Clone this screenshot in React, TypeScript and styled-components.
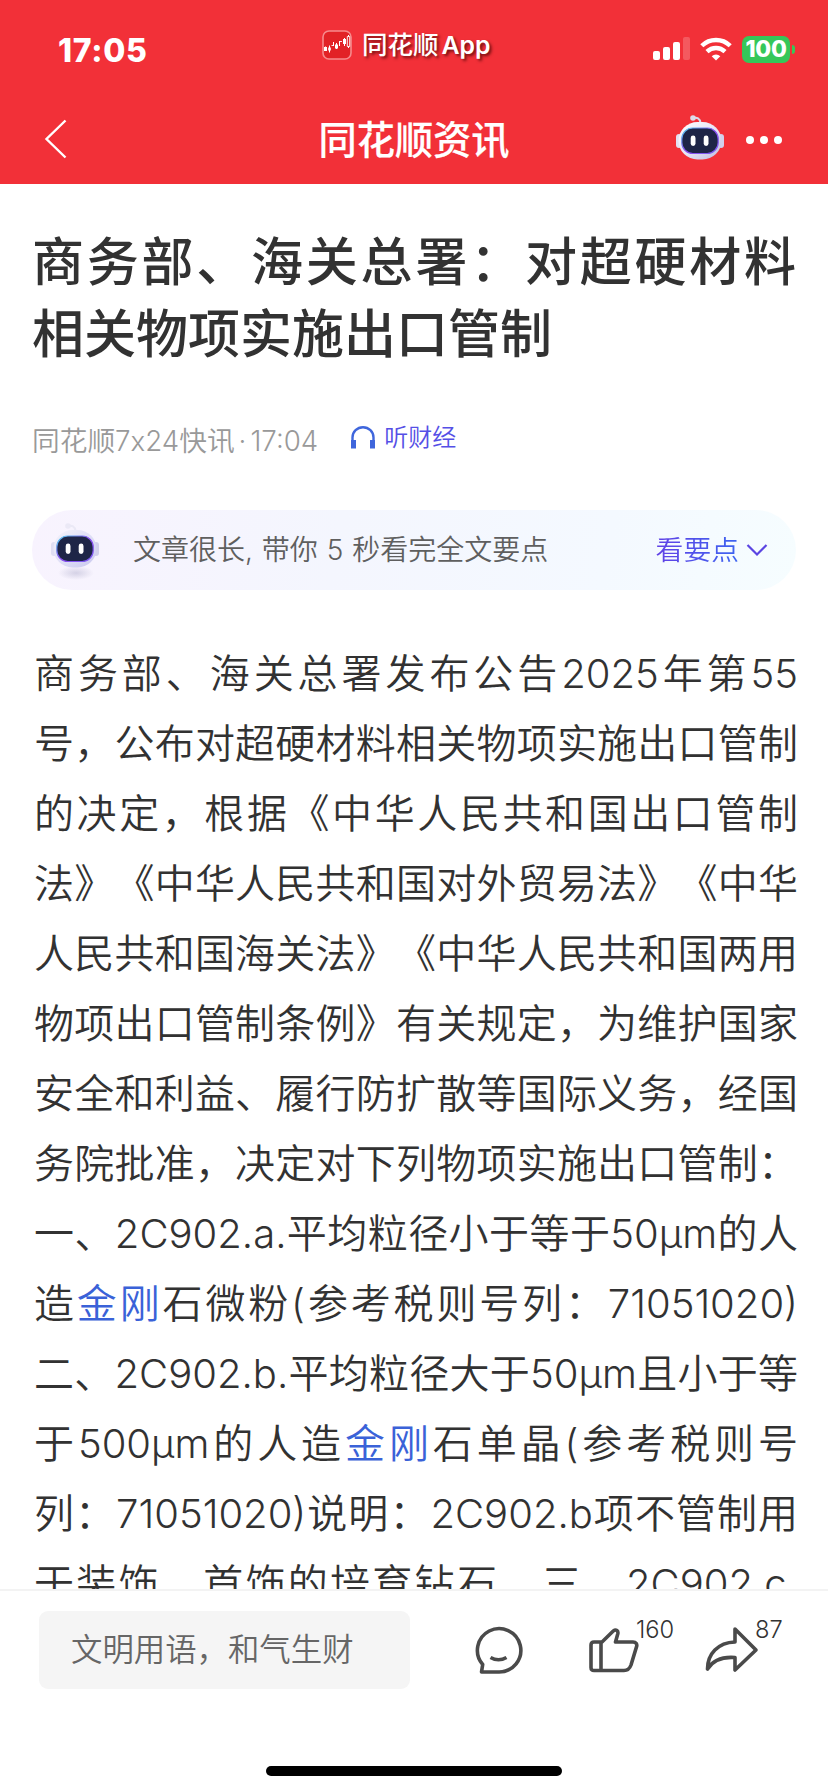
import React from "react";
import styled, { createGlobalStyle } from "styled-components";

const Global = createGlobalStyle`
  *{box-sizing:border-box}
  html,body{margin:0;padding:0;background:#fff}
  body{font-family:Inter,"Noto Sans CJK SC",sans-serif;text-spacing-trim:space-all;-webkit-font-smoothing:antialiased}
`;

const Screen = styled.div`
  width: 828px;
  height: 1792px;
  display: flex;
  flex-direction: column;
  overflow: hidden;
  background: #fff;
`;

const Header = styled.header`
  height: 184px;
  flex: none;
  background: #f23038;
  color: #fff;
`;

const StatusBar = styled.div`
  height: 96px;
  display: grid;
  grid-template-columns: 322px auto 1fr;
  align-items: center;
`;

const Clock = styled.div`
  padding: 5px 0 0 58px;
  font-size: 32px;
  font-weight: 800;
  line-height: 40px;
  letter-spacing: 0.7px;
`;

const AppTag = styled.div`
  display: flex;
  align-items: center;
  gap: 10px;
  margin-top: -6px;
  font-size: 25.5px;
  font-weight: 500;
  line-height: 32px;
  text-shadow: 2px 2px 3px rgba(60, 0, 0, 0.7);
`;

const Latin = styled.span`
  margin-left: 3px;
  font-size: 24.8px;
  font-weight: 600;
`;

const StatusIcons = styled.div`
  display: flex;
  justify-content: flex-end;
  align-items: center;
  padding: 2px 33px 0 0;
`;

const Battery = styled.div`
  display: flex;
  align-items: center;
  gap: 2px;
  margin-left: 10px;
`;

const BatteryBody = styled.div`
  width: 48px;
  height: 27px;
  border-radius: 7px;
  background: #35c759;
  font-size: 23px;
  font-weight: 800;
  line-height: 27px;
  text-align: center;
  letter-spacing: -0.3px;
`;

const BatteryTip = styled.div`
  width: 3px;
  height: 9px;
  border-radius: 0 3px 3px 0;
  background: #35c759;
`;

const NavBar = styled.nav`
  height: 88px;
  display: grid;
  grid-template-columns: 1fr auto 1fr;
  align-items: center;
`;

const BackButton = styled.div`
  padding: 0 0 3px 44px;
  display: flex;
`;

const NavTitle = styled.div`
  font-size: 38.2px;
  font-weight: 500;
  line-height: 48px;
  -webkit-text-stroke: 0.2px #fff;
`;

const NavActions = styled.div`
  display: flex;
  justify-content: flex-end;
  align-items: center;
  gap: 21px;
  padding-right: 46px;
`;

const RobotSlot = styled.div`
  display: flex;
  padding-top: 3px;
`;

const Article = styled.main`
  flex: 1;
  min-height: 0;
  overflow: hidden;
  padding: 43px 32px 0;
`;

const Line = styled.div<{ $ragged?: boolean }>`
  white-space: nowrap;
  text-align: justify;
  text-align-last: ${(p) => (p.$ragged ? "left" : "justify")};
`;

const Title = styled.h1`
  margin: 0;
  font-size: 52px;
  font-weight: 500;
  line-height: 72px;
  color: #323232;
`;

const Meta = styled.div`
  display: flex;
  align-items: center;
  height: 40px;
  margin-top: 50px;
  font-size: 27.7px;
  font-weight: 350;
  line-height: 40px;
  color: #999;
`;

const Dot = styled.span`
  margin: 0 4px;
`;

const Listen = styled.span`
  display: flex;
  align-items: center;
  gap: 8px;
  margin: -7px 0 0 32px;
  font-size: 24px;
  color: #554fe6;
`;

const Summary = styled.section`
  display: flex;
  align-items: center;
  height: 80px;
  margin-top: 49px;
  padding: 0 28px 0 18px;
  border-radius: 40px;
  background: linear-gradient(100deg, #f8f3fe 0%, #f4f6fe 40%, #f4f9ff 75%, #f6fdff 100%);
  font-weight: 350;
`;

const SummaryText = styled.span`
  flex: 1;
  margin-left: 33px;
  padding-bottom: 5px;
  font-size: 28px;
  word-spacing: 1px;
  color: #5f5f5f;
`;

const SummaryLink = styled.span`
  margin-right: 7px;
  padding-bottom: 5px;
  font-size: 27.8px;
  background: linear-gradient(90deg, #6141e6, #3c64f0);
  background-clip: text;
  color: transparent;
`;

const Body = styled.div`
  margin: 49px -2px 0 2px;
  font-size: 40px;
  font-weight: 350;
  line-height: 70px;
  color: #323232;
`;

const Term = styled.a`
  color: #3a62d8;
`;

const Footer = styled.footer`
  flex: none;
  height: 203px;
  border-top: 2px solid #f3f3f3;
  background: #fff;
  display: flex;
  flex-direction: column;
  justify-content: space-between;
`;

const Tools = styled.div`
  display: flex;
  align-items: center;
  padding: 20px 0 0 39px;
`;

const CommentInput = styled.div`
  width: 371px;
  height: 78px;
  padding-left: 32px;
  border-radius: 9px;
  background: #f5f5f5;
  font-size: 31.4px;
  font-weight: 350;
  line-height: 78px;
  color: #666;
`;

const Tool = styled.div<{ $left: number }>`
  position: relative;
  display: flex;
  margin-left: ${(p) => p.$left}px;
`;

const Count = styled.span<{ $left: number }>`
  position: absolute;
  left: ${(p) => p.$left}px;
  top: -9px;
  font-size: 23.7px;
  font-weight: 350;
  line-height: 28px;
  color: #333;
`;

const HomeIndicator = styled.div`
  width: 296px;
  height: 10px;
  margin: 0 auto 16px;
  border-radius: 5px;
  background: #000;
`;

const AppIcon = () => (
  <svg width="30" height="30" viewBox="0 0 30 30">
    <rect x="1" y="1" width="28" height="28" rx="6" fill="#e22226" stroke="#f68a8c" strokeWidth="1.6" />
    <path d="M3.500 16.500v4M7.500 15.500v7M11.500 12v4M14.500 13v6M17.500 11v5M22.500 8v8M26.500 5v13" stroke="#fff" strokeWidth="1" />
    <path d="M2 17h3v4H2zM6.200 17.500h2.600v3H6.200zM13 14.500h3v4h-3zM21 9h3v5h-3z" fill="#fff" />
    <path d="M25.300 6.500h2.400v10h-2.400z" fill="#e22226" stroke="#fff" strokeWidth="0.900" />
    <path d="M9.500 15.500h2M17.500 11.500h2.500" stroke="#fff" strokeWidth="0.900" />
  </svg>
);

const SignalIcon = () => (
  <svg width="37" height="24" viewBox="0 0 37 24" fill="#fff">
    <rect x="0" y="14" width="7" height="9" rx="2" />
    <rect x="10" y="10" width="7" height="13" rx="2" />
    <rect x="20" y="5" width="7" height="18" rx="2" />
    <rect x="30" y="0" width="7" height="23" rx="2" opacity="0.2" />
  </svg>
);

const WifiSvg = styled.svg`
  margin-left: 10px;
`;

const WifiIcon = () => (
  <WifiSvg width="32" height="24" viewBox="0 0 32 24" fill="none" stroke="#fff" strokeWidth="4.400">
    <path d="M1.800 8.800A20.200 20.200 0 0 1 30.200 8.800" />
    <path d="M7 14.600A13 13 0 0 1 25 14.600" />
    <path d="M16 23.500l-4.300-4.300a6.200 6.200 0 0 1 8.600 0z" fill="#fff" stroke="none" />
  </WifiSvg>
);

const Robot = ({ id, soft }: { id: string; soft?: boolean }) => (
  <svg width="50" height="60" viewBox="0 0 50 60">
    <defs>
      <linearGradient id={id + "shell"} x1="0" y1="0" x2="1" y2="1">
        <stop offset="0" stopColor={soft ? "#f5f3fb" : "#ffffff"} />
        <stop offset="0.500" stopColor={soft ? "#dfdff6" : "#e8e6f5"} />
        <stop offset="1" stopColor={soft ? "#c9c8ee" : "#bdbbe0"} />
      </linearGradient>
      <linearGradient id={id + "rim"} x1="0" y1="0" x2="1" y2="1">
        <stop offset="0" stopColor="#55d4ee" />
        <stop offset="0.500" stopColor="#8a4df0" />
        <stop offset="1" stopColor="#7a5cf0" />
      </linearGradient>
      <radialGradient id={id + "shade"}>
        <stop offset="0" stopColor="#aaa8c8" stopOpacity="0.450" />
        <stop offset="1" stopColor="#aaa8c8" stopOpacity="0" />
      </radialGradient>
    </defs>
    {soft && <ellipse cx="26" cy="53" rx="18" ry="7" fill={`url(#${id}shade)`} />}
    <path d="M18 6.200c4-1 7 0 7.500 5" fill="none" stroke={soft ? "#ebe9f6" : "#dcd9ea"} strokeWidth="2" />
    <circle cx="18" cy="6" r="2.800" fill={soft ? "#ebe9f6" : "#dedbe9"} />
    <rect x="1" y="22" width="6" height="14" rx="3" fill={soft ? "#dfdef3" : "#e3e1f2"} />
    <rect x="43" y="22" width="6" height="14" rx="3" fill="#d2d0ec" />
    <rect x="3.500" y="10" width="43" height="37.500" rx="19" fill={`url(#${id}shell)`} />
    <rect x="6.800" y="16" width="36.400" height="25.500" rx="11" fill="#1e2547" stroke={`url(#${id}rim)`} strokeWidth="1.200" />
    <rect x="15.700" y="23.500" width="4.800" height="10.500" rx="2.400" fill="#fff" />
    <rect x="28.700" y="23.500" width="4.800" height="10.500" rx="2.400" fill="#fff" />
  </svg>
);

const paragraph: React.ReactNode[] = [
  "商务部、海关总署发布公告2025年第55",
  "号，公布对超硬材料相关物项实施出口管制",
  "的决定，根据《中华人民共和国出口管制",
  "法》《中华人民共和国对外贸易法》《中华",
  "人民共和国海关法》《中华人民共和国两用",
  "物项出口管制条例》有关规定，为维护国家",
  "安全和利益、履行防扩散等国际义务，经国",
  "务院批准，决定对下列物项实施出口管制：",
  "一、2C902.a.平均粒径小于等于50μm的人",
  <>造<Term>金刚</Term>石微粉(参考税则号列：71051020)</>,
  "二、2C902.b.平均粒径大于50μm且小于等",
  <>于500μm的人造<Term>金刚</Term>石单晶(参考税则号</>,
  "列：71051020)说明：2C902.b项不管制用",
  "于装饰、首饰的培育钻石。三、2C902.c.",
];

export default function App() {
  return (
    <Screen>
      <Global />
      <Header>
        <StatusBar>
          <Clock>17:05</Clock>
          <AppTag>
            <AppIcon />
            <span>
              同花顺<Latin>App</Latin>
            </span>
          </AppTag>
          <StatusIcons>
            <SignalIcon />
            <WifiIcon />
            <Battery>
              <BatteryBody>100</BatteryBody>
              <BatteryTip />
            </Battery>
          </StatusIcons>
        </StatusBar>
        <NavBar>
          <BackButton>
            <svg width="24" height="40" viewBox="0 0 24 40" fill="none" stroke="#fff" strokeWidth="2.400">
              <path d="M21.500 1.500L2.500 20l19 18.500" />
            </svg>
          </BackButton>
          <NavTitle>同花顺资讯</NavTitle>
          <NavActions>
            <RobotSlot>
              <Robot id="nav" />
            </RobotSlot>
            <svg width="36" height="8" viewBox="0 0 36 8" fill="#fff">
              <circle cx="4" cy="4" r="4" />
              <circle cx="18" cy="4" r="4" />
              <circle cx="32" cy="4" r="4" />
            </svg>
          </NavActions>
        </NavBar>
      </Header>

      <Article>
        <Title>
          <Line>商务部、海关总署：对超硬材料</Line>
          <Line $ragged>相关物项实施出口管制</Line>
        </Title>
        <Meta>
          <span>
            同花顺7x24快讯<Dot>·</Dot>17:04
          </span>
          <Listen>
            <svg width="26" height="24" viewBox="0 0 26 24" fill="none" stroke="#3f66dc" strokeWidth="2.400">
              <path d="M2.500 16v-4.500a10.500 10.300 0 0 1 21 0V16" />
              <path d="M3.500 14v8.500M22.500 14v8.500" strokeWidth="5" />
            </svg>
            <span>听财经</span>
          </Listen>
        </Meta>
        <Summary>
          <Robot id="tip" soft />
          <SummaryText>文章很长, 带你 5 秒看完全文要点</SummaryText>
          <SummaryLink>看要点</SummaryLink>
          <svg width="22" height="14" viewBox="0 0 22 14" fill="none" stroke="#5b45e2" strokeWidth="2.200">
            <path d="M1.500 2L11 11.500 20.500 2" />
          </svg>
        </Summary>
        <Body>
          {paragraph.map((text, i) => (
            <Line key={i}>{text}</Line>
          ))}
        </Body>
      </Article>

      <Footer>
        <Tools>
          <CommentInput>文明用语，和气生财</CommentInput>
          <Tool $left={63}>
            <svg width="50" height="50" viewBox="0 0 50 50" fill="none" stroke="#4a4a4a" strokeWidth="3.600" strokeLinejoin="round">
              <path d="M8.500 47l1.200-7.500A21.700 21.700 0 1 1 26 47z" />
              <path d="M17.500 32.500q8 4.500 16 0" />
            </svg>
          </Tool>
          <Tool $left={66}>
            <svg width="50" height="50" viewBox="0 0 50 50" fill="none" stroke="#4a4a4a" strokeWidth="3.600" strokeLinejoin="round">
              <path d="M5 17h8L24.500 5.800c2.500-2 5 .2 4.300 3L26.500 17H44c3 0 4.300 2 3.600 4.500L42 40q-2 5.500-7 5.500H5q-3 0-3-3V20q0-3 3-3zM12 17v28.500" />
            </svg>
            <Count $left={47}>160</Count>
          </Tool>
          <Tool $left={66}>
            <svg width="54" height="50" viewBox="0 0 54 50" fill="none" stroke="#4a4a4a" strokeWidth="3.600" strokeLinejoin="round">
              <path d="M30 4L51 25 30 45V32.500C17 31.500 8 35 2.500 44 2.500 29 13 17.500 30 17z" />
            </svg>
            <Count $left={50}>87</Count>
          </Tool>
        </Tools>
        <HomeIndicator />
      </Footer>
    </Screen>
  );
}
